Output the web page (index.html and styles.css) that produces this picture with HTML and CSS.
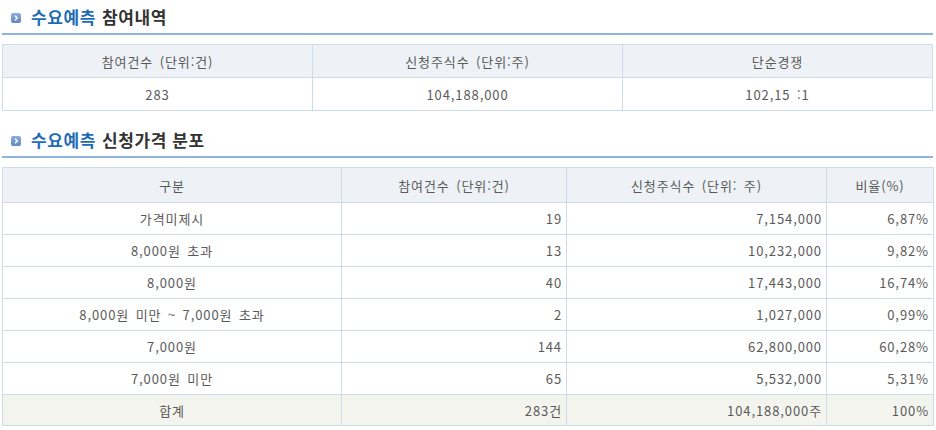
FILE: index.html
```html
<!DOCTYPE html>
<html lang="ko">
<head>
<meta charset="utf-8">
<link rel="stylesheet" href="styles.css">
</head>
<body>
<div class="page">
  <h2 class="title">
    <svg class="ico" width="10" height="10" viewBox="0 0 10 10"><defs><linearGradient id="g1" x1="0" y1="0" x2="0" y2="1"><stop offset="0" stop-color="#8aaedc"/><stop offset="1" stop-color="#5f88c2"/></linearGradient></defs><rect x="0" y="0" width="10" height="10" rx="2" fill="url(#g1)"/><path d="M4 2.8 L6.3 5 L4 7.2" fill="none" stroke="#fff" stroke-width="1.4"/></svg>
    <span class="blue">수요예측</span><span class="dark">참여내역</span>
  </h2>
  <table class="grid t1">
    <colgroup><col class="c310"><col class="c310"><col class="c310"></colgroup>
    <thead>
      <tr><th>참여건수 (단위:건)</th><th>신청주식수 (단위:주)</th><th>단순경쟁</th></tr>
    </thead>
    <tbody>
      <tr><td class="c">283</td><td class="c">104,188,000</td><td class="c">102,15 :1</td></tr>
    </tbody>
  </table>

  <h2 class="title second">
    <svg class="ico" width="10" height="10" viewBox="0 0 10 10"><defs><linearGradient id="g2" x1="0" y1="0" x2="0" y2="1"><stop offset="0" stop-color="#8aaedc"/><stop offset="1" stop-color="#5f88c2"/></linearGradient></defs><rect x="0" y="0" width="10" height="10" rx="2" fill="url(#g2)"/><path d="M4 2.8 L6.3 5 L4 7.2" fill="none" stroke="#fff" stroke-width="1.4"/></svg>
    <span class="blue">수요예측</span><span class="dark">신청가격 분포</span>
  </h2>
  <table class="grid t2">
    <colgroup><col class="w1"><col class="w2"><col class="w3"><col class="w4"></colgroup>
    <thead>
      <tr><th>구분</th><th>참여건수 (단위:건)</th><th>신청주식수 (단위: 주)</th><th>비율(%)</th></tr>
    </thead>
    <tbody>
      <tr><td class="c">가격미제시</td><td class="r">19</td><td class="r">7,154,000</td><td class="r">6,87%</td></tr>
      <tr><td class="c">8,000원 초과</td><td class="r">13</td><td class="r">10,232,000</td><td class="r">9,82%</td></tr>
      <tr><td class="c">8,000원</td><td class="r">40</td><td class="r">17,443,000</td><td class="r">16,74%</td></tr>
      <tr><td class="c">8,000원 미만 ~ 7,000원 초과</td><td class="r">2</td><td class="r">1,027,000</td><td class="r">0,99%</td></tr>
      <tr><td class="c">7,000원</td><td class="r">144</td><td class="r">62,800,000</td><td class="r">60,28%</td></tr>
      <tr><td class="c">7,000원 미만</td><td class="r">65</td><td class="r">5,532,000</td><td class="r">5,31%</td></tr>
      <tr class="sum"><td class="c">합계</td><td class="r">283건</td><td class="r">104,188,000주</td><td class="r">100%</td></tr>
    </tbody>
  </table>
</div>
</body>
</html>
```

FILE: styles.css
```css
html, body {
  margin: 0;
  padding: 0;
  background: #fff;
}
body {
  font-family: "Noto Sans CJK KR", "Noto Sans", sans-serif;
  font-size: 13px;
  color: #5a5a5a;
}
.page {
  width: 931px;
  margin-left: 2px;
}
.title {
  margin: 0;
  height: 33px;
  display: flex;
  align-items: center;
  padding-left: 9px;
  border-bottom: 2px solid #8db3e1;
  font-size: 17px;
  font-weight: bold;
  letter-spacing: 0.6px;
}
.title.second {
  margin-top: 12px;
}
.ico {
  margin-right: 10px;
  margin-top: 2px;
  flex: none;
}
.blue {
  color: #1f6cb6;
  margin-right: 6px;
}
.dark {
  color: #333;
}
.grid {
  margin-top: 9px;
  width: 931px;
  border-collapse: collapse;
  table-layout: fixed;
}
.grid th,
.grid td {
  border: 1px solid #cfdbe9;
  padding: 0 5px;
  font-weight: normal;
  white-space: nowrap;
  letter-spacing: 0.9px;
  word-spacing: 2px;
}
.grid th {
  background: #eef2f6;
  text-align: center;
}
.t1 th,
.t1 td {
  height: 32px;
}
.t2 th {
  height: 34px;
}
.t2 td {
  height: 31px;
}
.c310 { width: 310px; }
.w1 { width: 339px; }
.w2 { width: 225px; }
.w3 { width: 260px; }
.w4 { width: 107px; }
.c { text-align: center; }
.r { text-align: right; }
.t2 td.r { padding-right: 4px; }
.sum td {
  background: #f4f4ef;
  height: 30px;
}
```
